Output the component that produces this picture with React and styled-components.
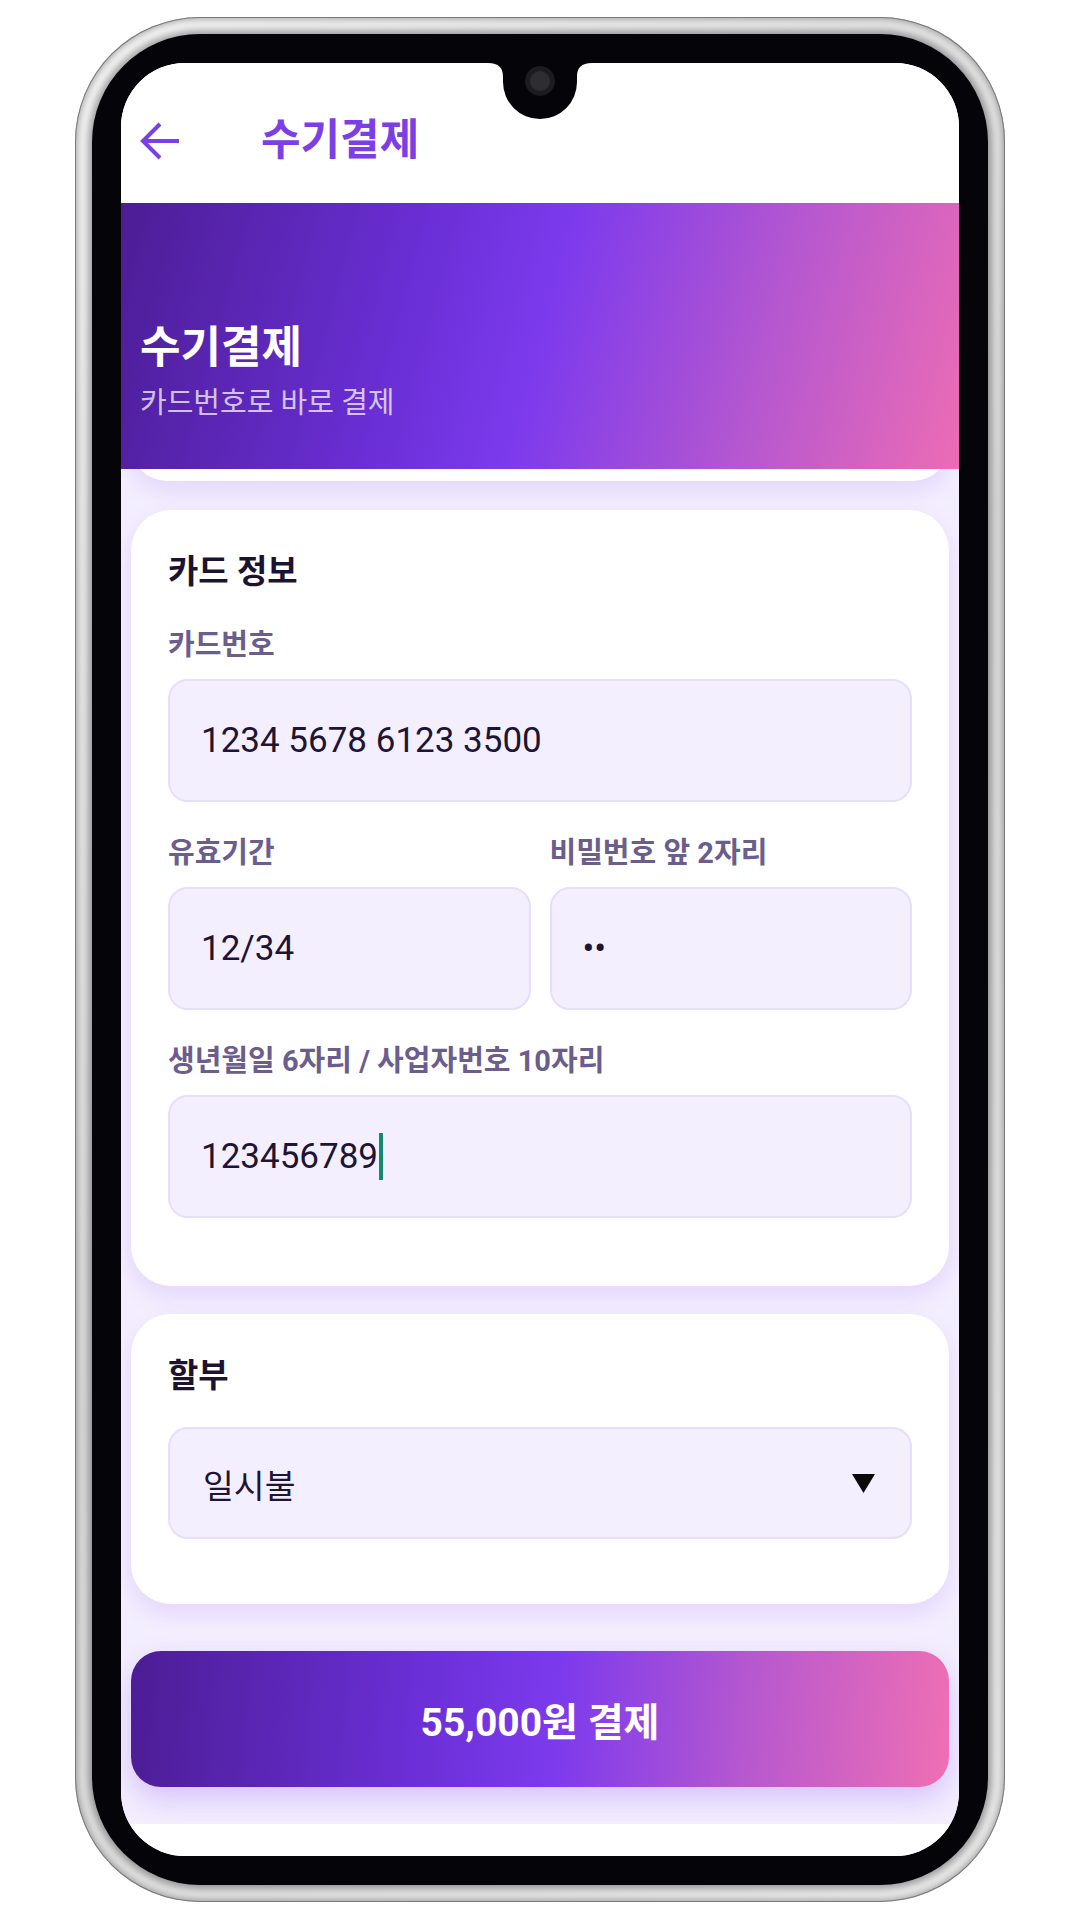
import React from 'react'
import styled, { createGlobalStyle } from 'styled-components'

const GlobalStyle = createGlobalStyle`
  html, body {
    margin: 0;
    padding: 0;
    background: #ffffff;
  }
  body {
    font-family: Roboto, "Noto Sans CJK KR", sans-serif;
    -webkit-font-smoothing: antialiased;
  }
`

const Page = styled.div`
  width: 1080px;
  height: 1920px;
  padding-top: 17px;
  box-sizing: border-box;
  display: flex;
  justify-content: center;
  align-items: flex-start;
`

const Phone = styled.div`
  width: 930px;
  padding: 17px;
  box-sizing: border-box;
  border-radius: 125px;
  background: linear-gradient(135deg, #fdfdfd 0%, #e2e2e2 50%, #f2f2f2 100%);
  box-shadow: inset 0 0 0 1px #7a7a7a, inset 0 0 7px 3px rgba(0, 0, 0, 0.32);
`

const Bezel = styled.div`
  padding: 29px;
  border-radius: 108px;
  background: #050409;
  box-shadow: 0 0 8px 4px rgba(0, 0, 0, 0.38);
`

const Screen = styled.div`
  position: relative;
  width: 838px;
  height: 1793px;
  border-radius: 64px;
  overflow: hidden;
  background: #ffffff;
  display: flex;
  flex-direction: column;
`

const Notch = styled.svg`
  position: absolute;
  top: 0;
  left: 367px;
  z-index: 5;
`

const TopBar = styled.header`
  height: 140px;
  box-sizing: border-box;
  padding: 16px 0 0 19px;
  display: flex;
  align-items: center;
  gap: 81px;
  background: #ffffff;
  flex-shrink: 0;
`

const BarTitle = styled.h1`
  margin: 0;
  font-size: 43px;
  line-height: 1.2;
  font-weight: 700;
  color: #7b3fe4;
`

const Hero = styled.section`
  position: relative;
  z-index: 2;
  height: 266px;
  box-sizing: border-box;
  padding: 0 19px 48px;
  display: flex;
  flex-direction: column;
  justify-content: flex-end;
  gap: 10px;
  background: linear-gradient(105deg, #4c1d95 0%, #6a2fd6 35%, #7c3aed 50%, #b457d0 75%, #ec6cb4 100%);
  flex-shrink: 0;
`

const HeroTitle = styled.h2`
  margin: 0;
  font-size: 44px;
  line-height: 54px;
  font-weight: 700;
  color: #ffffff;
`

const HeroSub = styled.p`
  margin: 0;
  font-size: 29px;
  line-height: 36px;
  color: rgba(255, 255, 255, 0.74);
`

const Content = styled.main`
  flex: 1;
  background: #f3eefe;
  padding: 0 10px 37px;
  display: flex;
  flex-direction: column;
`

const Card = styled.div`
  background: #ffffff;
  border-radius: 40px;
  box-shadow: 0 10px 22px rgba(124, 58, 237, 0.13);
  padding: ${p => p.$pad || '40px 37px 68px'};
  margin-top: ${p => p.$top || 0}px;
  display: flex;
  flex-direction: column;
`

const PeekCard = styled(Card)`
  height: 72px;
  margin-top: -60px;
  padding: 0;
`

const CardTitle = styled.h3`
  margin: 0 0 ${p => p.$gap || 37}px;
  font-size: 33px;
  line-height: 47px;
  font-weight: 700;
  color: #1c1231;
`

const Fields = styled.div`
  display: flex;
  flex-direction: column;
  gap: 33px;
`

const Row = styled.div`
  display: grid;
  grid-template-columns: 1fr 1fr;
  gap: 19px;
`

const Field = styled.div`
  display: flex;
  flex-direction: column;
  gap: 16px;
`

const Label = styled.label`
  font-size: 29px;
  line-height: 36px;
  font-weight: 700;
  color: #6b5d8c;
`

const Box = styled.div`
  height: ${p => p.$h || 123}px;
  box-sizing: border-box;
  border: 2px solid #e6defa;
  border-radius: 20px;
  background: #f3effe;
  padding: 0 35px 0 ${p => p.$left || 31}px;
  display: flex;
  align-items: center;
  justify-content: space-between;
  font-size: ${p => p.$size || 35}px;
  color: #1e1433;
`

const Caret = styled.span`
  display: inline-block;
  width: 4px;
  height: 47px;
  margin-left: 1px;
  background: #118a6f;
  vertical-align: middle;
`

const Value = styled.span`
  display: inline-flex;
  align-items: center;
`

const PayButton = styled.button`
  margin-top: 47px;
  height: 136px;
  border: none;
  border-radius: 30px;
  background: linear-gradient(95deg, #4c1d95 0%, #6a2fd6 35%, #7c3aed 52%, #b658cf 75%, #ef6fb3 100%);
  box-shadow: 0 12px 28px rgba(124, 58, 237, 0.24);
  font-family: Roboto, "Noto Sans CJK KR", sans-serif;
  font-size: 39px;
  font-weight: 700;
  color: #ffffff;
`

const BottomStrip = styled.div`
  height: 32px;
  background: #ffffff;
  flex-shrink: 0;
`

const BackIcon = () => (
  <svg width="40" height="40" viewBox="0 0 40 40" fill="none">
    <path d="M39 20H4" stroke="#7b3fe4" strokeWidth="4" />
    <path d="M20 3L3 20L20 37" stroke="#7b3fe4" strokeWidth="4" strokeLinejoin="miter" />
  </svg>
)

const DownTriangle = () => (
  <svg width="23" height="19" viewBox="0 0 23 19">
    <polygon points="0,0 23,0 11.5,19" fill="#0a0a0a" />
  </svg>
)

export default function App() {
  return (
    <>
      <GlobalStyle />
      <Page>
        <Phone>
          <Bezel>
            <Screen>
              <Notch width="104" height="56" viewBox="0 0 104 56">
                <path d="M0 0H104C93 0 89 5 89 14V19A37 37 0 0 1 15 19V14C15 5 11 0 0 0Z" fill="#050409" />
                <circle cx="52" cy="18" r="15" fill="#1c1b20" />
                <circle cx="52" cy="18" r="10" fill="#2e2d33" />
              </Notch>

              <TopBar>
                <BackIcon />
                <BarTitle>수기결제</BarTitle>
              </TopBar>

              <Hero>
                <HeroTitle>수기결제</HeroTitle>
                <HeroSub>카드번호로 바로 결제</HeroSub>
              </Hero>

              <Content>
                <PeekCard />

                <Card $top={29} $pad="38px 37px 68px">
                  <CardTitle $gap={32}>카드 정보</CardTitle>
                  <Fields>
                    <Field>
                      <Label>카드번호</Label>
                      <Box>1234 5678 6123 3500</Box>
                    </Field>
                    <Row>
                      <Field>
                        <Label>유효기간</Label>
                        <Box>12/34</Box>
                      </Field>
                      <Field>
                        <Label>비밀번호 앞 2자리</Label>
                        <Box>••</Box>
                      </Field>
                    </Row>
                    <Field>
                      <Label>생년월일 6자리 / 사업자번호 10자리</Label>
                      <Box>
                        <Value>123456789<Caret /></Value>
                      </Box>
                    </Field>
                  </Fields>
                </Card>

                <Card $top={28} $pad="38px 37px 65px">
                  <CardTitle $gap={28}>할부</CardTitle>
                  <Box $h={112} $size={33.5} $left={33}>
                    <span>일시불</span>
                    <DownTriangle />
                  </Box>
                </Card>

                <PayButton>55,000원 결제</PayButton>
              </Content>

              <BottomStrip />
            </Screen>
          </Bezel>
        </Phone>
      </Page>
    </>
  )
}
